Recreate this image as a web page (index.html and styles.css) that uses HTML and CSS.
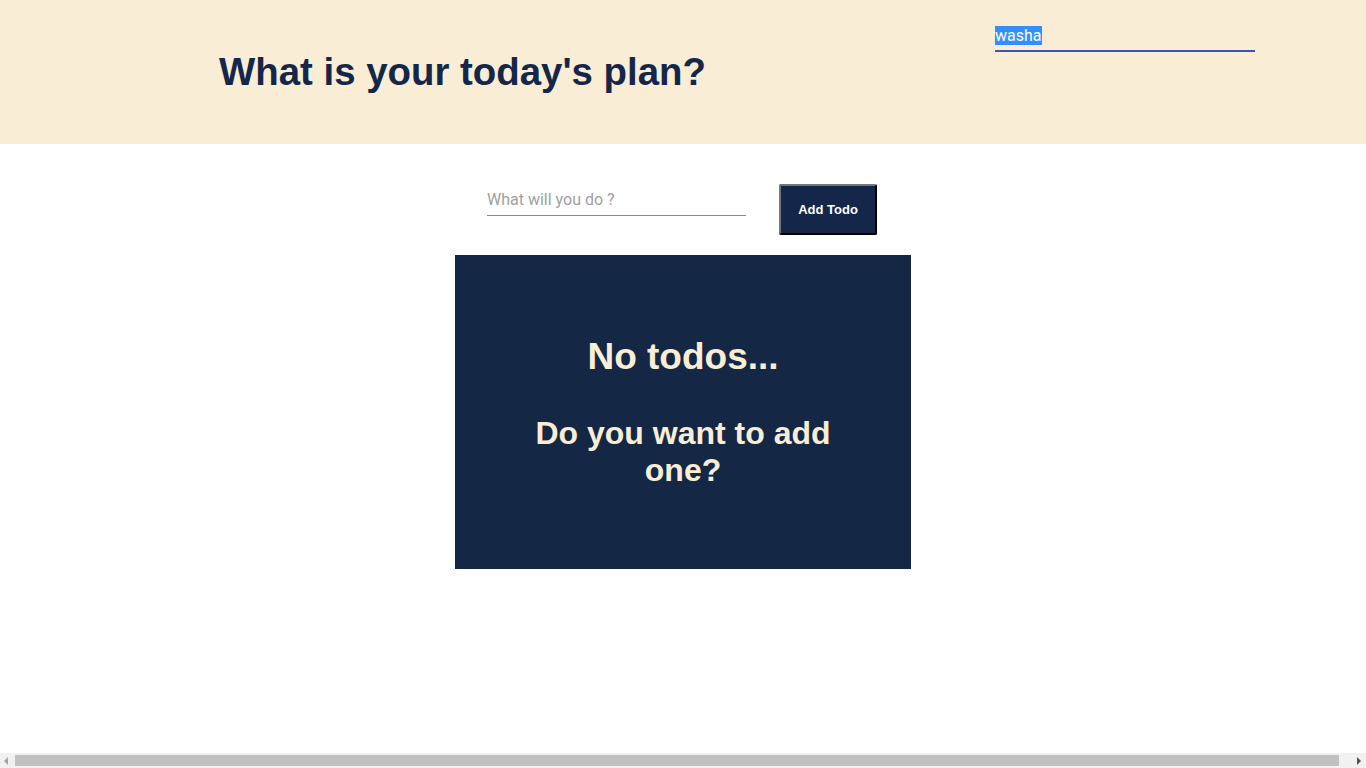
FILE: index.html
```html
<!DOCTYPE html>
<html lang="en">
<head>
<meta charset="utf-8">
<title>Todos</title>
<link rel="stylesheet" href="styles.css">
</head>
<body>
  <header class="top">
    <h1 class="title">What is your today's plan?</h1>
    <div class="name-field"><span class="name-sel">washa</span></div>
  </header>
  <main class="main">
    <form class="add-form">
      <input class="todo-input" type="text" placeholder="What will you do ?">
      <button class="add-btn" type="button">Add Todo</button>
    </form>
    <section class="empty">
      <h2 class="empty-title">No todos...</h2>
      <h3 class="empty-sub">Do you want to add one?</h3>
    </section>
  </main>
  <div class="hscroll" aria-hidden="true">
    <span class="arrow arrow-left"></span>
    <span class="thumb"></span>
    <span class="arrow arrow-right"></span>
  </div>
</body>
</html>
```
FILE: styles.css
```css
html, body {
  margin: 0;
  padding: 0;
}
body {
  font-family: "Liberation Sans", Arial, sans-serif;
  background: #ffffff;
}
.top {
  height: 144px;
  box-sizing: border-box;
  background: #f9eed5;
  display: flex;
  justify-content: space-between;
  align-items: flex-start;
  padding: 0 111px 0 219px;
}
.title {
  margin: 0;
  align-self: center;
  font-size: 38.4px;
  font-weight: bold;
  color: #14274a;
}
.name-field {
  margin-top: 26px;
  width: 260px;
  height: 24px;
  border-bottom: 2px solid #3f51b5;
  font-family: Roboto, sans-serif;
  font-size: 16px;
  line-height: 19px;
  color: #ffffff;
}
.name-sel {
  background: #338fff;
  display: inline-block;
}
.main {
  display: flex;
  flex-direction: column;
  align-items: center;
  padding-top: 40px;
}
.add-form {
  display: flex;
  align-items: flex-start;
  gap: 33px;
  margin: 0 2px 20px 0;
}
.todo-input {
  width: 259px;
  height: 30px;
  margin-top: 2px;
  box-sizing: border-box;
  border: none;
  border-bottom: 1px solid #8a8a8a;
  background: transparent;
  font-family: Roboto, sans-serif;
  font-size: 16px;
  padding: 0 0 3px 0;
  outline: none;
  color: #333;
}
.todo-input::placeholder {
  color: #a0a0a0;
}
.add-btn {
  width: 98px;
  height: 51px;
  box-sizing: border-box;
  background: #14274a;
  color: #ffffff;
  border: 2px outset #767676;
  border-right-color: #1f1f1f;
  border-bottom-color: #1f1f1f;
  border-radius: 2px;
  font-family: "Liberation Sans", Arial, sans-serif;
  font-weight: bold;
  font-size: 13px;
  padding: 0;
}
.empty {
  width: 456px;
  height: 314px;
  box-sizing: border-box;
  background: #142744;
  color: #f9eed5;
  text-align: center;
  padding: 81px 50px 0 50px;
}
.empty-title {
  margin: 0 0 37px 0;
  font-size: 37px;
  font-weight: bold;
}
.empty-sub {
  margin: 0;
  font-size: 32px;
  font-weight: bold;
}
.hscroll {
  position: fixed;
  left: 0;
  right: 0;
  bottom: 0;
  height: 15px;
  background: #f1f1f1;
  display: flex;
  align-items: center;
}
.arrow {
  width: 0;
  height: 0;
  border-top: 4px solid transparent;
  border-bottom: 4px solid transparent;
}
.arrow-left {
  border-right: 4px solid #a3a3a3;
  margin: 0 7px 0 4px;
}
.arrow-right {
  border-left: 4px solid #505050;
  margin: 0 5px 0 18px;
}
.thumb {
  flex: 1;
  height: 11px;
  background: #c1c1c1;
}
```
